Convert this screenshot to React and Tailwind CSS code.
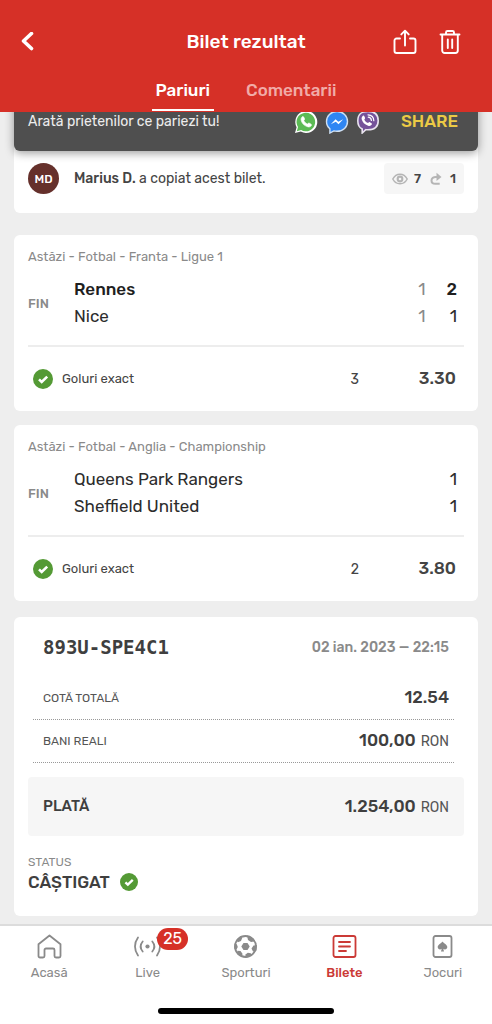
import React from "react";

function CheckBadge({ className }) {
  return (
    <svg viewBox="0 0 20 20" className={className} aria-hidden="true">
      <circle cx="10" cy="10" r="10" fill="#549a35" />
      <path d="M6 10.4 8.7 13 14.2 7.6" fill="none" stroke="#fff" strokeWidth="2.6" />
    </svg>
  );
}

const handset =
  "M8.2 6.9c.5-.5 1.2-.4 1.5.2l.8 1.7c.2.5 0 .9-.7 1.6.7 1.7 2 3 3.800 3.700.8-1 1.200-1.200 1.700-.9l1.700 1c.5.3.6.8.3 1.300-.8 1.300-2 1.700-3.700 1.200-3.500-1.100-5.700-3.400-6.400-6.400-.3-1.500.1-2.600 1-3.400z";

function WhatsAppIcon() {
  return (
    <svg viewBox="0 0 24 24" className="size-6" aria-hidden="true">
      <path d="M1 23 2.600 17.200A11 11 0 1 1 6.800 21.500z" fill="#fff" />
      <path d="M2.800 21.200 4 17A9.300 9.300 0 1 1 7.100 20z" fill="#5cbb55" />
      <path d={handset} fill="#fff" stroke="#fff" strokeWidth=".7" />
    </svg>
  );
}

function MessengerIcon() {
  return (
    <svg viewBox="0 0 24 24" className="size-6" aria-hidden="true">
      <path
        d="M12 1.500C5.800 1.500 1.500 5.900 1.500 11.400c0 3 1.300 5.500 3.400 7.300V23l3.900-2.100c1 .3 2.100.4 3.200.4 6.200 0 10.500-4.400 10.500-9.900S18.200 1.500 12 1.500z"
        fill="#2f86f3"
        stroke="#cfe0f3"
        strokeWidth="1.400"
      />
      <path d="m5.800 14.300 4.800-5.100 2.700 2.500 4.900-2.500-4.700 5.100-2.700-2.500z" fill="#fff" />
    </svg>
  );
}

function ViberIcon() {
  return (
    <svg viewBox="0 0 24 24" className="size-6" aria-hidden="true">
      <path
        d="M12 1.500c-7 0-10.200 2.500-10.200 9.300 0 4.200 1.300 6.900 4.400 8.200V23l3.600-3.300c.7.100 1.400.1 2.200.1 7 0 10.200-2.500 10.200-9S19 1.500 12 1.500z"
        fill="#75529a"
        stroke="#e9e3ef"
        strokeWidth="1.600"
      />
      <path d={handset} fill="#fff" transform="translate(-1.500 -1)" />
      <path
        d="M12 4.800c3.700.2 5.700 2.200 5.800 5.900M12.300 7.200c2 .2 3 1.300 3.100 3.300"
        fill="none"
        stroke="#fff"
        strokeWidth="1.200"
        strokeLinecap="round"
      />
    </svg>
  );
}

function Header() {
  return (
    <header className="relative z-10 bg-[#d63027] text-white">
      <div className="grid grid-cols-[1fr_auto_1fr] items-center px-5 pt-6">
        <button aria-label="Înapoi" className="flex h-9 w-6 items-center">
          <svg viewBox="0 0 16 20" className="h-5 w-4" fill="none" stroke="currentColor" strokeWidth="3.600" strokeLinecap="round" strokeLinejoin="round">
            <path d="M11.500 1.500 3.500 9l8 7.500" />
          </svg>
        </button>
        <h1 className="text-[19px] leading-9 font-medium">Bilet rezultat</h1>
        <div className="flex justify-end gap-[22px] pr-[11px]">
          <button aria-label="Distribuie">
            <svg viewBox="0 0 24 26" className="h-[26px] w-6" fill="none" stroke="currentColor" strokeWidth="1.900" strokeLinecap="round" strokeLinejoin="round">
              <path d="M7 9.500H3.500a2 2 0 0 0-2 2v10.500a2 2 0 0 0 2 2h17a2 2 0 0 0 2-2V11.500a2 2 0 0 0-2-2H17M12 16.500V2M8.300 5.400 12 1.700l3.700 3.700" />
            </svg>
          </button>
          <button aria-label="Șterge">
            <svg viewBox="0 0 22 26" className="h-[26px] w-[22px]" fill="none" stroke="currentColor" strokeWidth="1.900" strokeLinecap="round" strokeLinejoin="round">
              <path d="M1.500 5.500h19M7 5.300V3.500A1.500 1.500 0 0 1 8.500 2h5A1.500 1.500 0 0 1 15 3.500v1.800M3.200 5.800v15.700A2.500 2.500 0 0 0 5.700 24h10.600a2.500 2.500 0 0 0 2.500-2.500V5.800M8.800 10.500v8.500M13.200 10.500v8.500" />
            </svg>
          </button>
        </div>
      </div>
      <div className="flex justify-center gap-7 pt-4 pb-px text-[17px] font-medium">
        <button className="flex h-[35px] items-start justify-center border-b-2 border-white px-1 leading-7">Pariuri</button>
        <button className="flex h-[35px] items-start justify-center px-1 leading-7 text-[#f1aba7]">Comentarii</button>
      </div>
    </header>
  );
}

function ShareCard() {
  return (
    <section className="-mt-5 rounded-b-md bg-white">
      <div className="flex h-[59px] items-center rounded-b-md bg-[#4f4f4f] pr-5 pl-[14px] shadow-[0_2px_10px_rgba(0,0,0,0.4)]">
        <p className="text-[14px] text-[#ececec]">Arată prietenilor ce pariezi tu!</p>
        <div className="ml-auto flex gap-[7px]">
          <WhatsAppIcon />
          <MessengerIcon />
          <ViberIcon />
        </div>
        <button className="ml-[21px] text-[17px] font-medium text-[#ecca45]">SHARE</button>
      </div>
      <div className="flex items-center px-[14px] pt-3 pb-[19px]">
        <span className="flex size-[31px] items-center justify-center rounded-full bg-[#65302b] text-[12px] font-medium text-white">MD</span>
        <p className="ml-[15px] text-[14px] text-[#444]">
          <b className="font-medium">Marius D.</b> a copiat acest bilet.
        </p>
        <div className="ml-auto flex h-[31px] items-center gap-[6px] rounded-sm bg-[#f6f6f6] px-2 text-[13px] font-medium text-[#444]">
          <svg viewBox="0 0 16 12" className="h-3 w-4" aria-hidden="true">
            <path d="M.8 6C2.500 2.800 5 1.200 8 1.200S13.500 2.800 15.200 6C13.500 9.200 11 10.800 8 10.800S2.500 9.200.8 6z" fill="none" stroke="#b5b5b5" strokeWidth="1.500" />
            <circle cx="8" cy="6" r="3.400" fill="#b5b5b5" />
            <circle cx="8" cy="6" r="1.300" fill="#f6f6f6" />
          </svg>
          <span>7</span>
          <svg viewBox="0 0 12 14" className="ml-[3px] h-[14px] w-3" aria-hidden="true">
            <path d="M6.500.8 11.500 4.900 6.500 9z" fill="#b5b5b5" />
            <path d="M8 4.900H5.800C3.500 4.900 1.500 6.300 1.500 8.500s1.700 3.300 3.800 3.300h4.400" fill="none" stroke="#b5b5b5" strokeWidth="2" />
          </svg>
          <span className="ml-[2px]">1</span>
        </div>
      </div>
    </section>
  );
}

function BetCard({ league, teams, pick, odds }) {
  return (
    <article className="rounded-md bg-white px-[14px] pt-3">
      <p className="text-[13px] leading-5 text-[#8a8a8a]">{league}</p>
      <div className="mt-2 mb-4 flex items-center">
        <span className="w-[46px] pt-1 text-[13px] font-medium text-[#8a8a8a]">FIN</span>
        <table className="flex-1 text-[17px] text-[#2c2c2c]">
          <tbody>
            {teams.map((t) => (
              <tr key={t.name} className={t.winner ? "font-medium text-[#1f1f1f]" : ""}>
                <td className="h-[27px] p-0 leading-6">{t.name}</td>
                <td className="w-7 p-0 text-center leading-6 font-normal text-[#8a8a8a]">{t.half}</td>
                <td className="w-7 p-0 pr-[7px] text-right leading-6">{t.goals}</td>
              </tr>
            ))}
          </tbody>
        </table>
      </div>
      <div className="flex h-[66px] items-center border-t-2 border-[#ededed] pr-2 pl-[5px] text-[#444]">
        <CheckBadge className="size-5" />
        <span className="ml-[9px] flex-1 text-[13px]">{pick.market}</span>
        <span className="text-[14px]">{pick.value}</span>
        <span className="w-[97px] text-right text-[17px] font-medium">{odds}</span>
      </div>
    </article>
  );
}

function TicketRow({ label, children }) {
  return (
    <div className="mr-[10px] ml-[5px] flex h-[43px] items-center justify-between border-b border-dotted border-[#999] pr-[5px] pl-[10px]">
      <dt className="text-[12px] text-[#555]">{label}</dt>
      <dd className="text-[17px] font-medium">{children}</dd>
    </div>
  );
}

function Currency() {
  return <span className="ml-px text-[14px] font-normal text-[#555]">RON</span>;
}

function TicketCard() {
  return (
    <section className="mt-[2px] rounded-md bg-white px-[14px] pb-6 text-[#3f3f3f]">
      <div className="flex h-[60px] items-center justify-between px-[15px]">
        <h2 className="font-['DejaVu_Sans_Mono',monospace] text-[19px] font-bold">893U-SPE4C1</h2>
        <time className="text-[14px] font-medium text-[#8a8a8a]">02 ian. 2023 — 22:15</time>
      </div>
      <dl>
        <TicketRow label="COTĂ TOTALĂ">12.54</TicketRow>
        <TicketRow label="BANI REALI">
          100,00 <Currency />
        </TicketRow>
        <div className="mt-[14px] flex h-[59px] items-center justify-between rounded-sm bg-[#f6f6f6] px-[15px]">
          <dt className="text-[15px] font-medium">PLATĂ</dt>
          <dd className="text-[17px] font-medium">
            1.254,00 <Currency />
          </dd>
        </div>
      </dl>
      <p className="mt-4 text-[12px] leading-5 text-[#8a8a8a]">STATUS</p>
      <p className="flex items-center gap-[10px] text-[17px] leading-5 font-medium">
        CÂȘTIGAT
        <CheckBadge className="size-[18px]" />
      </p>
    </section>
  );
}

const navIcons = {
  home: (
    <path d="M1.500 10.200 12.500 1.500l11 8.700v11.800a1.500 1.500 0 0 1-1.500 1.500h-3a1.500 1.500 0 0 1-1.500-1.500v-6a1.500 1.500 0 0 0-1.500-1.500h-7A1.500 1.500 0 0 0 7.500 16v6A1.500 1.500 0 0 1 6 23.500H3A1.500 1.500 0 0 1 1.500 22z" />
  ),
  live: (
    <>
      <circle cx="12.500" cy="12.500" r="2.100" fill="currentColor" stroke="none" />
      <path d="M7.700 7.500c-2.500 3-2.500 7 0 10M17.300 7.500c2.500 3 2.500 7 0 10M3 3.500c-4 5.500-4 12.500 0 18M22 3.500c4 5.500 4 12.500 0 18" />
    </>
  ),
  ball: (
    <>
      <circle cx="12.500" cy="12.500" r="10.500" />
      <g fill="currentColor" stroke="none">
        <path d="M10.500 9h4l2.200 3.500-2.200 3.500h-4l-2.200-3.500z" />
        <path d="m3.500 5.500 4-3.500 1.700 2-1.200 3-3.200 1.200zM14 1.500l6.500 3 .5 3-3 .5-3-2zM24 11l-.5 5.500-3.500 1-1.500-3 2-3zM18.500 21.500 13 23.800l-.8-3 2.600-2 3 .5zM9 23.200l-5-3.200.5-3.200 3 .2 2 2.800zM1.200 14.500 1.500 9.500l2.300.7 1 2.800-1.300 2.500z" />
      </g>
    </>
  ),
  ticket: (
    <>
      <rect x="1.500" y="2" width="22" height="21" rx="2" />
      <path d="M7 8h11M7 12.500h11M7 17h7" />
    </>
  ),
  cards: (
    <>
      <rect x="3.500" y="2" width="18" height="21" rx="2" />
      <path
        d="M12.500 7.500c-1.200 2-4.800 3-4.800 5.600 0 2.200 2.600 3 4 1.600L11 17.500h3l-.7-2.800c1.400 1.400 4 .6 4-1.600 0-2.600-3.600-3.600-4.800-5.600z"
        fill="currentColor"
        stroke="none"
      />
    </>
  ),
};

const navItems = [
  { icon: "home", label: "Acasă" },
  { icon: "live", label: "Live", badge: 25 },
  { icon: "ball", label: "Sporturi" },
  { icon: "ticket", label: "Bilete", active: true },
  { icon: "cards", label: "Jocuri" },
];

function BottomNav() {
  return (
    <nav className="mt-auto border-t-2 border-[#dcdcdc] bg-white pt-2">
      <ul className="grid grid-cols-5">
        {navItems.map((item) => (
          <li key={item.icon}>
            <a href="#" className={item.active ? "flex flex-col items-center text-[#cb3a36]" : "flex flex-col items-center text-[#8a8a8a]"}>
              <span className="relative">
                <svg viewBox="0 0 25 25" className="size-[25px] overflow-visible" fill="none" stroke="currentColor" strokeWidth="1.800" strokeLinejoin="round" strokeLinecap="round" aria-hidden="true">
                  {navIcons[item.icon]}
                </svg>
                {item.badge && (
                  <span className="absolute -top-[6px] left-[22px] flex h-[22px] w-[31px] items-center justify-center rounded-full bg-[#d63027] text-[16px] text-white">
                    {item.badge}
                  </span>
                )}
              </span>
              <span className={item.active ? "mt-1 text-[13px] leading-5 font-medium" : "mt-1 text-[13px] leading-5"}>{item.label}</span>
            </a>
          </li>
        ))}
      </ul>
      <div className="mx-auto mt-[25px] mb-[10px] h-[6px] w-[176px] rounded-full bg-black" />
    </nav>
  );
}

export default function App() {
  return (
    <div className="flex min-h-screen flex-col bg-[#eeeeee] font-[Rubik,Roboto,sans-serif]">
      <Header />
      <main className="flex flex-col gap-[14px] px-[14px] pb-2">
        <ShareCard />
        <div className="mt-2 flex flex-col gap-[14px]">
          <BetCard
            league="Astăzi - Fotbal - Franta - Ligue 1"
            teams={[
              { name: "Rennes", half: 1, goals: 2, winner: true },
              { name: "Nice", half: 1, goals: 1 },
            ]}
            pick={{ market: "Goluri exact", value: 3 }}
            odds="3.30"
          />
          <BetCard
            league="Astăzi - Fotbal - Anglia - Championship"
            teams={[
              { name: "Queens Park Rangers", goals: 1 },
              { name: "Sheffield United", goals: 1 },
            ]}
            pick={{ market: "Goluri exact", value: 2 }}
            odds="3.80"
          />
        </div>
        <TicketCard />
      </main>
      <BottomNav />
    </div>
  );
}
